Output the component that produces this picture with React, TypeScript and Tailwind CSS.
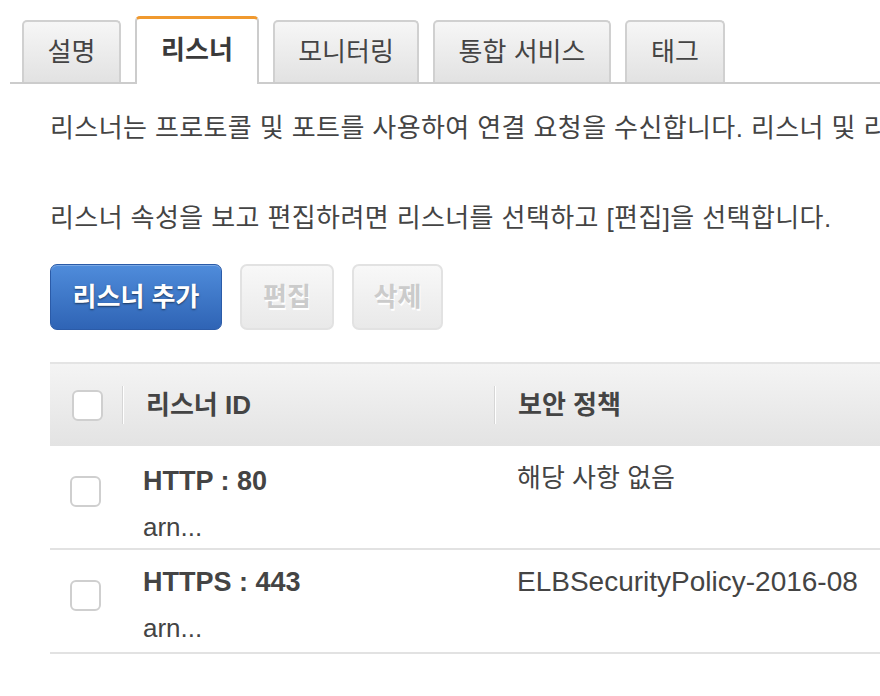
import React from "react";

const tabs = [
  { label: "설명", w: "w-[99px]", active: false },
  { label: "리스너", w: "w-[124px]", active: true },
  { label: "모니터링", w: "w-[146px]", active: false },
  { label: "통합 서비스", w: "w-[178px]", active: false },
  { label: "태그", w: "w-[100px]", active: false },
];

function Check() {
  return <div className="w-[31px] h-[31px] rounded-[6px] border-2 border-[#cfcfcf] bg-white" />;
}

const rows = [
  { title: "HTTP : 80", policy: "해당 사항 없음", policyKo: true, pt: "pt-[15px]" },
  { title: "HTTPS : 443", policy: "ELBSecurityPolicy-2016-08", policyKo: false, pt: "pt-[12px]" },
];

export default function App() {
  return (
    <div className="w-[880px] h-[696px] overflow-hidden bg-white text-[#444] font-['Liberation_Sans','Noto_Sans_CJK_KR',sans-serif]">
      {/* Tabs */}
      <div className="ml-[10px] pl-[12px] pt-[16px] flex items-end gap-[14px] border-b-2 border-[#cccccc]">
        {tabs.map((t) =>
          t.active ? (
            <div
              key={t.label}
              className={`${t.w} h-[68px] -mb-[2px] bg-white rounded-t-[5px] border-x-2 border-[#cccccc] border-t-[3px] border-t-[#f0992f] flex items-center justify-center text-[26px] font-bold text-[#3a3a3a] pb-[2px]`}
            >
              {t.label}
            </div>
          ) : (
            <div
              key={t.label}
              className={`${t.w} h-[62px] rounded-t-[5px] border-x-2 border-t-2 border-[#d0d0d0] bg-linear-to-b from-[#f6f6f6] to-[#e2e2e2] flex items-center justify-center text-[26px] text-[#444]`}
            >
              {t.label}
            </div>
          )
        )}
      </div>

      <div className="pl-[50px]">
        <p className="mt-[28px] text-[26px] leading-[32px] tracking-[0.4px] whitespace-nowrap">
          리스너는 프로토콜 및 포트를 사용하여 연결 요청을 수신합니다. 리스너 및 리스너 규칙에 대해 자세히 알아보기
        </p>
        <p className="mt-[58px] text-[26px] leading-[32px] tracking-[0.4px] whitespace-nowrap">
          리스너 속성을 보고 편집하려면 리스너를 선택하고 [편집]을 선택합니다.
        </p>

        <div className="mt-[30px] flex gap-[18px]">
          <button className="w-[172px] h-[66px] rounded-[7px] border border-[#2b5ba8] bg-linear-to-b from-[#4f8cdb] to-[#2f64b5] text-white text-[26px] font-bold [text-shadow:0_1px_2px_rgba(0,0,0,0.55)] shadow-[inset_0_1px_0_rgba(255,255,255,0.25)]">
            리스너 추가
          </button>
          <button className="w-[94px] h-[66px] rounded-[7px] border-2 border-[#e2e2e2] bg-linear-to-b from-[#f8f8f8] to-[#e9e9e9] text-[#cbcbcb] text-[26px] font-bold [text-shadow:1px_2px_0_#ffffff]">
            편집
          </button>
          <button className="w-[91px] h-[66px] rounded-[7px] border-2 border-[#e2e2e2] bg-linear-to-b from-[#f8f8f8] to-[#e9e9e9] text-[#cbcbcb] text-[26px] font-bold [text-shadow:1px_2px_0_#ffffff]">
            삭제
          </button>
        </div>

        {/* Table */}
        <div className="mt-[32px] w-[900px]">
          <div className="h-[84px] border-t-2 border-[#e4e4e4] bg-linear-to-b from-[#f4f4f4] to-[#e3e3e3] grid grid-cols-[72px_372px_1fr] items-center">
            <div className="pl-[22px] flex items-center">
              <Check />
            </div>
            <div className="flex items-center h-[40px]">
              <div className="w-[2px] h-[38px] bg-[#d6d6d6] border-r border-white" />
              <span className="pl-[22px] text-[26px] font-bold text-[#444]">리스너 ID</span>
            </div>
            <div className="flex items-center h-[40px]">
              <div className="w-[2px] h-[38px] bg-[#d6d6d6] border-r border-white" />
              <span className="pl-[22px] text-[26px] font-bold text-[#444]">보안 정책</span>
            </div>
          </div>

          {rows.map((r) => (
            <div key={r.title} className="h-[104px] border-b-2 border-[#e2e2e2] grid grid-cols-[72px_372px_1fr]">
              <div className="pl-[20px] pt-[30px]">
                <Check />
              </div>
              <div className={`pl-[21px] ${r.pt}`}>
                <div className="text-[27px] leading-[40px] font-bold text-[#444]">{r.title}</div>
                <div className="mt-[6px] text-[26px] leading-[40px] text-[#444]">arn...</div>
              </div>
              <div className="pl-[23px] pt-[14px]">
                <div className={`${r.policyKo ? "text-[26px]" : "text-[28px]"} leading-[36px] text-[#444] whitespace-nowrap`}>
                  {r.policy}
                </div>
              </div>
            </div>
          ))}
        </div>
      </div>
    </div>
  );
}
